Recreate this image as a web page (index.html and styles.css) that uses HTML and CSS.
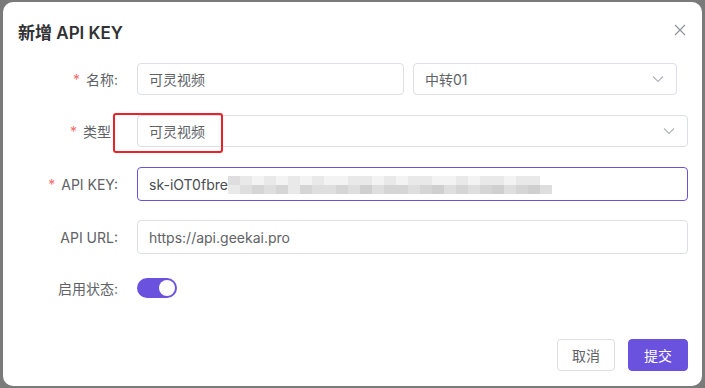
FILE: index.html
```html
<!DOCTYPE html>
<html lang="zh">
<head>
<meta charset="utf-8">
<link rel="stylesheet" href="styles.css">
</head>
<body>
<div class="dialog">
  <div class="header">
    <span class="title">新增 API KEY</span>
    <svg class="close" width="12" height="12" viewBox="0 0 12 12"><path d="M1 1L11 11M11 1L1 11" stroke="#909399" stroke-width="1.2" fill="none"/></svg>
  </div>
  <div class="form">
    <div class="row">
      <label class="label"><span class="req">*</span> 名称:</label>
      <div class="controls">
        <div class="input w1">可灵视频</div>
        <div class="input select w2">中转01<svg class="arrow" width="12" height="8" viewBox="0 0 12 8"><path d="M1 1.5L6 6.5L11 1.5" stroke="#b0b3b9" stroke-width="1.1" fill="none"/></svg></div>
      </div>
    </div>
    <div class="row">
      <label class="label nocolon"><span class="req">*</span> 类型</label>
      <div class="controls">
        <div class="input select full">可灵视频<svg class="arrow" width="12" height="8" viewBox="0 0 12 8"><path d="M1 1.5L6 6.5L11 1.5" stroke="#b0b3b9" stroke-width="1.1" fill="none"/></svg></div>
      </div>
      <div class="mark"></div>
    </div>
    <div class="row tall">
      <label class="label"><span class="req">*</span> API KEY:</label>
      <div class="controls">
        <div class="input full focus">sk-iOT0fbre<span class="mosaic">
          <i class="s3"></i><i class="s2"></i><i class="s1"></i><i class="s2"></i><i class="s1"></i><i class="s2"></i><i class="s1"></i><i class="s2"></i><i class="s1"></i><i class="s1"></i><i class="s2"></i><i class="s2"></i><i class="s1"></i><i class="s2"></i><i class="s1"></i><i class="s2"></i><i class="s2"></i><i class="s1"></i><i class="s1"></i><i class="s2"></i><i class="s1"></i><i class="s2"></i><i class="s2"></i><i class="s1"></i><i class="s2"></i><i class="s2"></i><i class="s0"></i><i class="s0"></i>
          <i class="s2"></i><i class="s3"></i><i class="s4"></i><i class="s3"></i><i class="s4"></i><i class="s2"></i><i class="s4"></i><i class="s3"></i><i class="s3"></i><i class="s4"></i><i class="s3"></i><i class="s5"></i><i class="s3"></i><i class="s4"></i><i class="s4"></i><i class="s3"></i><i class="s4"></i><i class="s5"></i><i class="s3"></i><i class="s4"></i><i class="s3"></i><i class="s4"></i><i class="s5"></i><i class="s3"></i><i class="s4"></i><i class="s5"></i><i class="s3"></i><i class="s0"></i>
        </span></div>
      </div>
    </div>
    <div class="row tall">
      <label class="label">API URL:</label>
      <div class="controls">
        <div class="input full">https://api.geekai.pro</div>
      </div>
    </div>
    <div class="row sw">
      <label class="label">启用状态:</label>
      <div class="controls">
        <span class="switch"><span class="knob"></span></span>
      </div>
    </div>
  </div>
  <div class="footer">
    <button class="btn">取消</button>
    <button class="btn primary">提交</button>
  </div>
</div>
</body>
</html>
```
FILE: styles.css
```css
* { box-sizing: border-box; }
html, body { margin: 0; padding: 0; }
body {
  width: 705px;
  height: 388px;
  background: #7a7a7a;
  font-family: Inter, "Noto Sans CJK SC", sans-serif;
  overflow: hidden;
  padding: 2px 3px 0 3px;
}
.dialog {
  position: relative;
  width: 699px;
  height: 384px;
  background: #fff;
  border-radius: 10px;
  display: flex;
  flex-direction: column;
}
.header {
  display: flex;
  justify-content: space-between;
  align-items: flex-start;
  padding: 19px 18px 0 15px;
  height: 59px;
}
.title {
  font-size: 17px;
  line-height: 24px;
  font-weight: 600;
  color: #303133;
}
.close { margin-top: 3px; margin-right: -2px; }
.form {
  display: flex;
  flex-direction: column;
  gap: 20px;
  padding-right: 14px;
  margin-top: 2px;
}
.row {
  position: relative;
  display: flex;
  align-items: center;
  height: 32px;
}
.row.tall { height: 34px; }
.row.tall + .row.tall { margin-top: -1px; }
.row.sw { height: 30px; margin-top: -1px; }
.label {
  width: 134px;
  padding-right: 19px;
  text-align: right;
  font-size: 14px;
  color: #606266;
  white-space: nowrap;
}
.label.nocolon { padding-right: 26px; }
.req { color: #f56c6c; margin-right: 2px; }
.controls {
  flex: 1;
  display: flex;
  gap: 9px;
  height: 100%;
  align-items: center;
}
.input {
  height: 100%;
  border: 1px solid #dcdfe6;
  border-radius: 4px;
  padding: 0 11px;
  font-size: 14px;
  color: #606266;
  display: flex;
  align-items: center;
  white-space: nowrap;
  overflow: hidden;
}
.input.focus { border-color: #6b52de; color: #4a4c52; }
.w1 { width: 267px; }
.w2 { width: 264px; }
.full { flex: 1; }
.select { justify-content: space-between; }
.arrow { margin-right: 1px; }
.mosaic {
  display: grid;
  grid-template-columns: repeat(28, 12px);
  grid-auto-rows: 9px;
  margin-top: 2px;
}
.mosaic i { display: block; }
.s0 { background: #fff; }
.s1 { background: #f3f3f3; }
.s2 { background: #e9e9e9; }
.s3 { background: #dedede; }
.s4 { background: #d5d5d5; }
.s5 { background: #cfcfcf; }
.mark {
  position: absolute;
  left: 110px;
  top: -2px;
  width: 110px;
  height: 40px;
  border: 2px solid #e8232a;
  border-radius: 3px;
}
.switch {
  width: 40px;
  height: 20px;
  border-radius: 10px;
  background: #6b52de;
  display: flex;
  align-items: center;
  justify-content: flex-end;
  padding: 2px;
}
.knob {
  width: 16px;
  height: 16px;
  border-radius: 50%;
  background: #fff;
}
.footer {
  margin-top: auto;
  display: flex;
  justify-content: flex-end;
  gap: 13px;
  padding: 0 14px 15px 0;
}
.btn {
  height: 32px;
  padding: 0 14px;
  font-family: Inter, "Noto Sans CJK SC", sans-serif;
  font-size: 14px;
  border: 1px solid #dcdfe6;
  border-radius: 4px;
  background: #fff;
  color: #606266;
}
.btn.primary {
  background: #6b52de;
  border-color: #6b52de;
  color: #fff;
  padding: 0 15px;
}
```
